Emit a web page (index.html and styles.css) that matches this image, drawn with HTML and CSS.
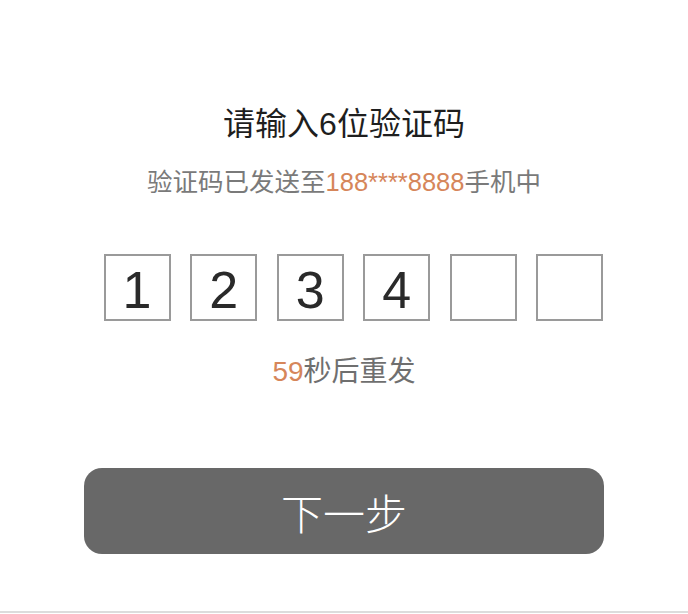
FILE: index.html
```html
<!DOCTYPE html>
<html lang="zh-CN">
<head>
<meta charset="utf-8">
<title>验证码</title>
<link rel="stylesheet" href="styles.css">
</head>
<body>
<div class="page">
  <main class="content">
    <h1 class="title">请输入6位验证码</h1>
    <p class="sub">验证码已发送至<span class="hl">188****8888</span>手机中</p>
    <div class="codes">
      <div class="cell">1</div>
      <div class="cell">2</div>
      <div class="cell">3</div>
      <div class="cell">4</div>
      <div class="cell"></div>
      <div class="cell"></div>
    </div>
    <p class="resend"><span class="hl">59</span>秒后重发</p>
    <button class="next" type="button">下一步</button>
  </main>
  <div class="bottom"></div>
</div>
</body>
</html>
```
FILE: styles.css
```css
html, body {
  margin: 0;
  padding: 0;
  background: #fff;
}
body {
  font-family: "Liberation Sans", "Noto Sans CJK SC", sans-serif;
}
.page {
  width: 688px;
  height: 614px;
  display: flex;
  flex-direction: column;
  overflow: hidden;
}
.content {
  flex: 1;
  display: flex;
  flex-direction: column;
  align-items: center;
  padding-top: 103px;
}
.title {
  margin: 0;
  font-size: 32px;
  font-weight: normal;
  line-height: 42px;
  color: #1e1e1e;
}
.sub {
  margin: 19px 0 0;
  font-size: 25.5px;
  line-height: 36px;
  color: #7a7a7a;
}
.hl {
  color: #d6865a;
}
.codes {
  margin-top: 54px;
  margin-left: 19px;
  width: 500px;
  display: flex;
  justify-content: space-between;
}
.cell {
  box-sizing: border-box;
  width: 67px;
  height: 67px;
  padding-top: 5px;
  border: 2px solid #9a9a9a;
  display: flex;
  align-items: center;
  justify-content: center;
  font-size: 52px;
  color: #2a2a2a;
  line-height: 1;
}
.resend {
  margin: 31px 0 0;
  font-size: 28px;
  line-height: 40px;
  color: #6f6f6f;
}
.next {
  margin-top: 76px;
  width: 520px;
  height: 86px;
  border: 0;
  border-radius: 18px;
  background: #686868;
  color: #fff;
  font-family: "Liberation Sans", "Noto Sans CJK SC", sans-serif;
  font-size: 42px;
  font-weight: 300;
  padding: 0;
}
.bottom {
  height: 2px;
  background: #dcdcdc;
  margin-bottom: 1px;
}
```
